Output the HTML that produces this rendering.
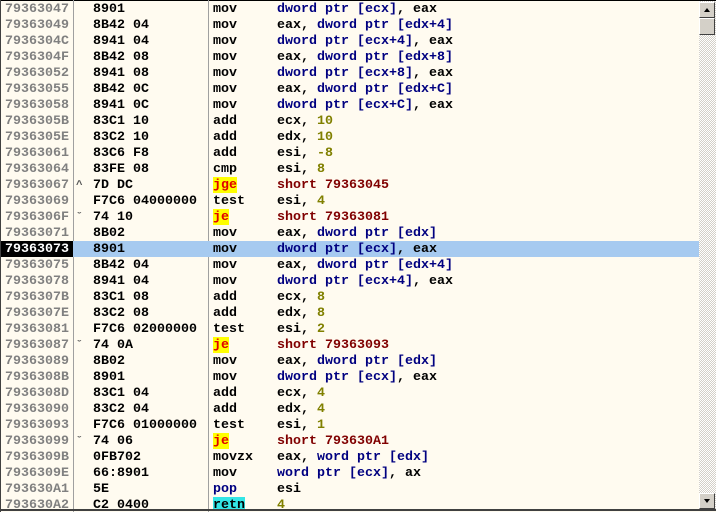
<!DOCTYPE html><html><head><style>
body{margin:0;width:716px;height:512px;overflow:hidden;background:#fffbf0;position:relative;font-family:"Liberation Mono",monospace;font-weight:bold;font-size:13.33px}
.r{position:absolute;left:1px;width:698px;height:16px;line-height:18px;white-space:pre}
.r span{position:absolute;top:0;height:16px}
.a{left:2px;color:#808080;width:70px;padding-left:2px}
.j{left:75px;color:#555;font-size:11px}
.h{left:92px;color:#000}
.m{left:212px;color:#000}
.o{left:276px;color:#000}
.n{color:#000080}.k{color:#808000}.t{color:#800000}
.y{background:#ffff00;color:#e00000}
.c{background:#33e6e6;color:#000}
.sel{background:#a6caf0}
.sel .a{background:#000;color:#fff;left:0;padding-left:4px;width:68px}
.v{position:absolute;top:0;bottom:0;width:1px;background:#a0a0a0}
</style></head><body>
<div style="position:absolute;left:0;top:0;width:716px;height:1px;background:#000"></div>
<div style="position:absolute;left:0;top:0;width:1px;height:512px;background:#404040"></div>
<div class="v" style="left:73px"></div><div class="v" style="left:208px"></div>
<div class="r" style="top:1px"><span class="a">79363047</span><span class="h">8901</span><span class="m">mov</span><span class="o"><b class="n">dword ptr [ecx]</b>, eax</span></div>
<div class="r" style="top:17px"><span class="a">79363049</span><span class="h">8B42 04</span><span class="m">mov</span><span class="o">eax, <b class="n">dword ptr [edx+4]</b></span></div>
<div class="r" style="top:33px"><span class="a">7936304C</span><span class="h">8941 04</span><span class="m">mov</span><span class="o"><b class="n">dword ptr [ecx+4]</b>, eax</span></div>
<div class="r" style="top:49px"><span class="a">7936304F</span><span class="h">8B42 08</span><span class="m">mov</span><span class="o">eax, <b class="n">dword ptr [edx+8]</b></span></div>
<div class="r" style="top:65px"><span class="a">79363052</span><span class="h">8941 08</span><span class="m">mov</span><span class="o"><b class="n">dword ptr [ecx+8]</b>, eax</span></div>
<div class="r" style="top:81px"><span class="a">79363055</span><span class="h">8B42 0C</span><span class="m">mov</span><span class="o">eax, <b class="n">dword ptr [edx+C]</b></span></div>
<div class="r" style="top:97px"><span class="a">79363058</span><span class="h">8941 0C</span><span class="m">mov</span><span class="o"><b class="n">dword ptr [ecx+C]</b>, eax</span></div>
<div class="r" style="top:113px"><span class="a">7936305B</span><span class="h">83C1 10</span><span class="m">add</span><span class="o">ecx, <b class="k">10</b></span></div>
<div class="r" style="top:129px"><span class="a">7936305E</span><span class="h">83C2 10</span><span class="m">add</span><span class="o">edx, <b class="k">10</b></span></div>
<div class="r" style="top:145px"><span class="a">79363061</span><span class="h">83C6 F8</span><span class="m">add</span><span class="o">esi, <b class="k">-8</b></span></div>
<div class="r" style="top:161px"><span class="a">79363064</span><span class="h">83FE 08</span><span class="m">cmp</span><span class="o">esi, <b class="k">8</b></span></div>
<div class="r" style="top:177px"><span class="a">79363067</span><span class="j">^</span><span class="h">7D DC</span><span class="m y">jge</span><span class="o t">short 79363045</span></div>
<div class="r" style="top:193px"><span class="a">79363069</span><span class="h">F7C6 04000000</span><span class="m">test</span><span class="o">esi, <b class="k">4</b></span></div>
<div class="r" style="top:209px"><span class="a">7936306F</span><span class="j">&#711;</span><span class="h">74 10</span><span class="m y">je</span><span class="o t">short 79363081</span></div>
<div class="r" style="top:225px"><span class="a">79363071</span><span class="h">8B02</span><span class="m">mov</span><span class="o">eax, <b class="n">dword ptr [edx]</b></span></div>
<div class="r sel" style="top:241px"><span class="a">79363073</span><span class="h">8901</span><span class="m">mov</span><span class="o"><b class="n">dword ptr [ecx]</b>, eax</span></div>
<div class="r" style="top:257px"><span class="a">79363075</span><span class="h">8B42 04</span><span class="m">mov</span><span class="o">eax, <b class="n">dword ptr [edx+4]</b></span></div>
<div class="r" style="top:273px"><span class="a">79363078</span><span class="h">8941 04</span><span class="m">mov</span><span class="o"><b class="n">dword ptr [ecx+4]</b>, eax</span></div>
<div class="r" style="top:289px"><span class="a">7936307B</span><span class="h">83C1 08</span><span class="m">add</span><span class="o">ecx, <b class="k">8</b></span></div>
<div class="r" style="top:305px"><span class="a">7936307E</span><span class="h">83C2 08</span><span class="m">add</span><span class="o">edx, <b class="k">8</b></span></div>
<div class="r" style="top:321px"><span class="a">79363081</span><span class="h">F7C6 02000000</span><span class="m">test</span><span class="o">esi, <b class="k">2</b></span></div>
<div class="r" style="top:337px"><span class="a">79363087</span><span class="j">&#711;</span><span class="h">74 0A</span><span class="m y">je</span><span class="o t">short 79363093</span></div>
<div class="r" style="top:353px"><span class="a">79363089</span><span class="h">8B02</span><span class="m">mov</span><span class="o">eax, <b class="n">dword ptr [edx]</b></span></div>
<div class="r" style="top:369px"><span class="a">7936308B</span><span class="h">8901</span><span class="m">mov</span><span class="o"><b class="n">dword ptr [ecx]</b>, eax</span></div>
<div class="r" style="top:385px"><span class="a">7936308D</span><span class="h">83C1 04</span><span class="m">add</span><span class="o">ecx, <b class="k">4</b></span></div>
<div class="r" style="top:401px"><span class="a">79363090</span><span class="h">83C2 04</span><span class="m">add</span><span class="o">edx, <b class="k">4</b></span></div>
<div class="r" style="top:417px"><span class="a">79363093</span><span class="h">F7C6 01000000</span><span class="m">test</span><span class="o">esi, <b class="k">1</b></span></div>
<div class="r" style="top:433px"><span class="a">79363099</span><span class="j">&#711;</span><span class="h">74 06</span><span class="m y">je</span><span class="o t">short 793630A1</span></div>
<div class="r" style="top:449px"><span class="a">7936309B</span><span class="h">0FB702</span><span class="m">movzx</span><span class="o">eax, <b class="n">word ptr [edx]</b></span></div>
<div class="r" style="top:465px"><span class="a">7936309E</span><span class="h">66:8901</span><span class="m">mov</span><span class="o"><b class="n">word ptr [ecx]</b>, ax</span></div>
<div class="r" style="top:481px"><span class="a">793630A1</span><span class="h">5E</span><span class="m" style="color:#000080">pop</span><span class="o">esi</span></div>
<div class="r" style="top:497px;height:12px;overflow:hidden"><span class="a">793630A2</span><span class="h">C2 0400</span><span class="m c">retn</span><span class="o k">4</span></div>
<div style="position:absolute;left:0;top:509px;width:716px;height:2px;background:#404040"></div>
<div style="position:absolute;left:699px;top:1px;width:17px;height:508px;background-color:#e8e6e0;background-image:repeating-conic-gradient(#d4d0c8 0 25%,#fff 0 50%);background-size:2px 2px"></div>
<div style="position:absolute;left:699px;top:2px;background:#d4d0c8;border:1px solid;border-color:#fff #404040 #404040 #fff;box-sizing:border-box;width:16px;height:16px"><div style="position:absolute;left:4px;top:5px;border-left:3px solid transparent;border-right:3px solid transparent;border-bottom:4px solid #000"></div></div>
<div style="position:absolute;left:699px;top:18px;width:16px;height:17px;background:#d4d0c8;border:1px solid;border-color:#fff #404040 #404040 #fff;box-sizing:border-box"></div>
<div style="position:absolute;left:699px;top:493px;width:16px;height:16px;background:#d4d0c8;border:1px solid;border-color:#fff #404040 #404040 #fff;box-sizing:border-box"><div style="position:absolute;left:4px;top:5px;border-left:3px solid transparent;border-right:3px solid transparent;border-top:4px solid #000"></div></div>
</body></html>
